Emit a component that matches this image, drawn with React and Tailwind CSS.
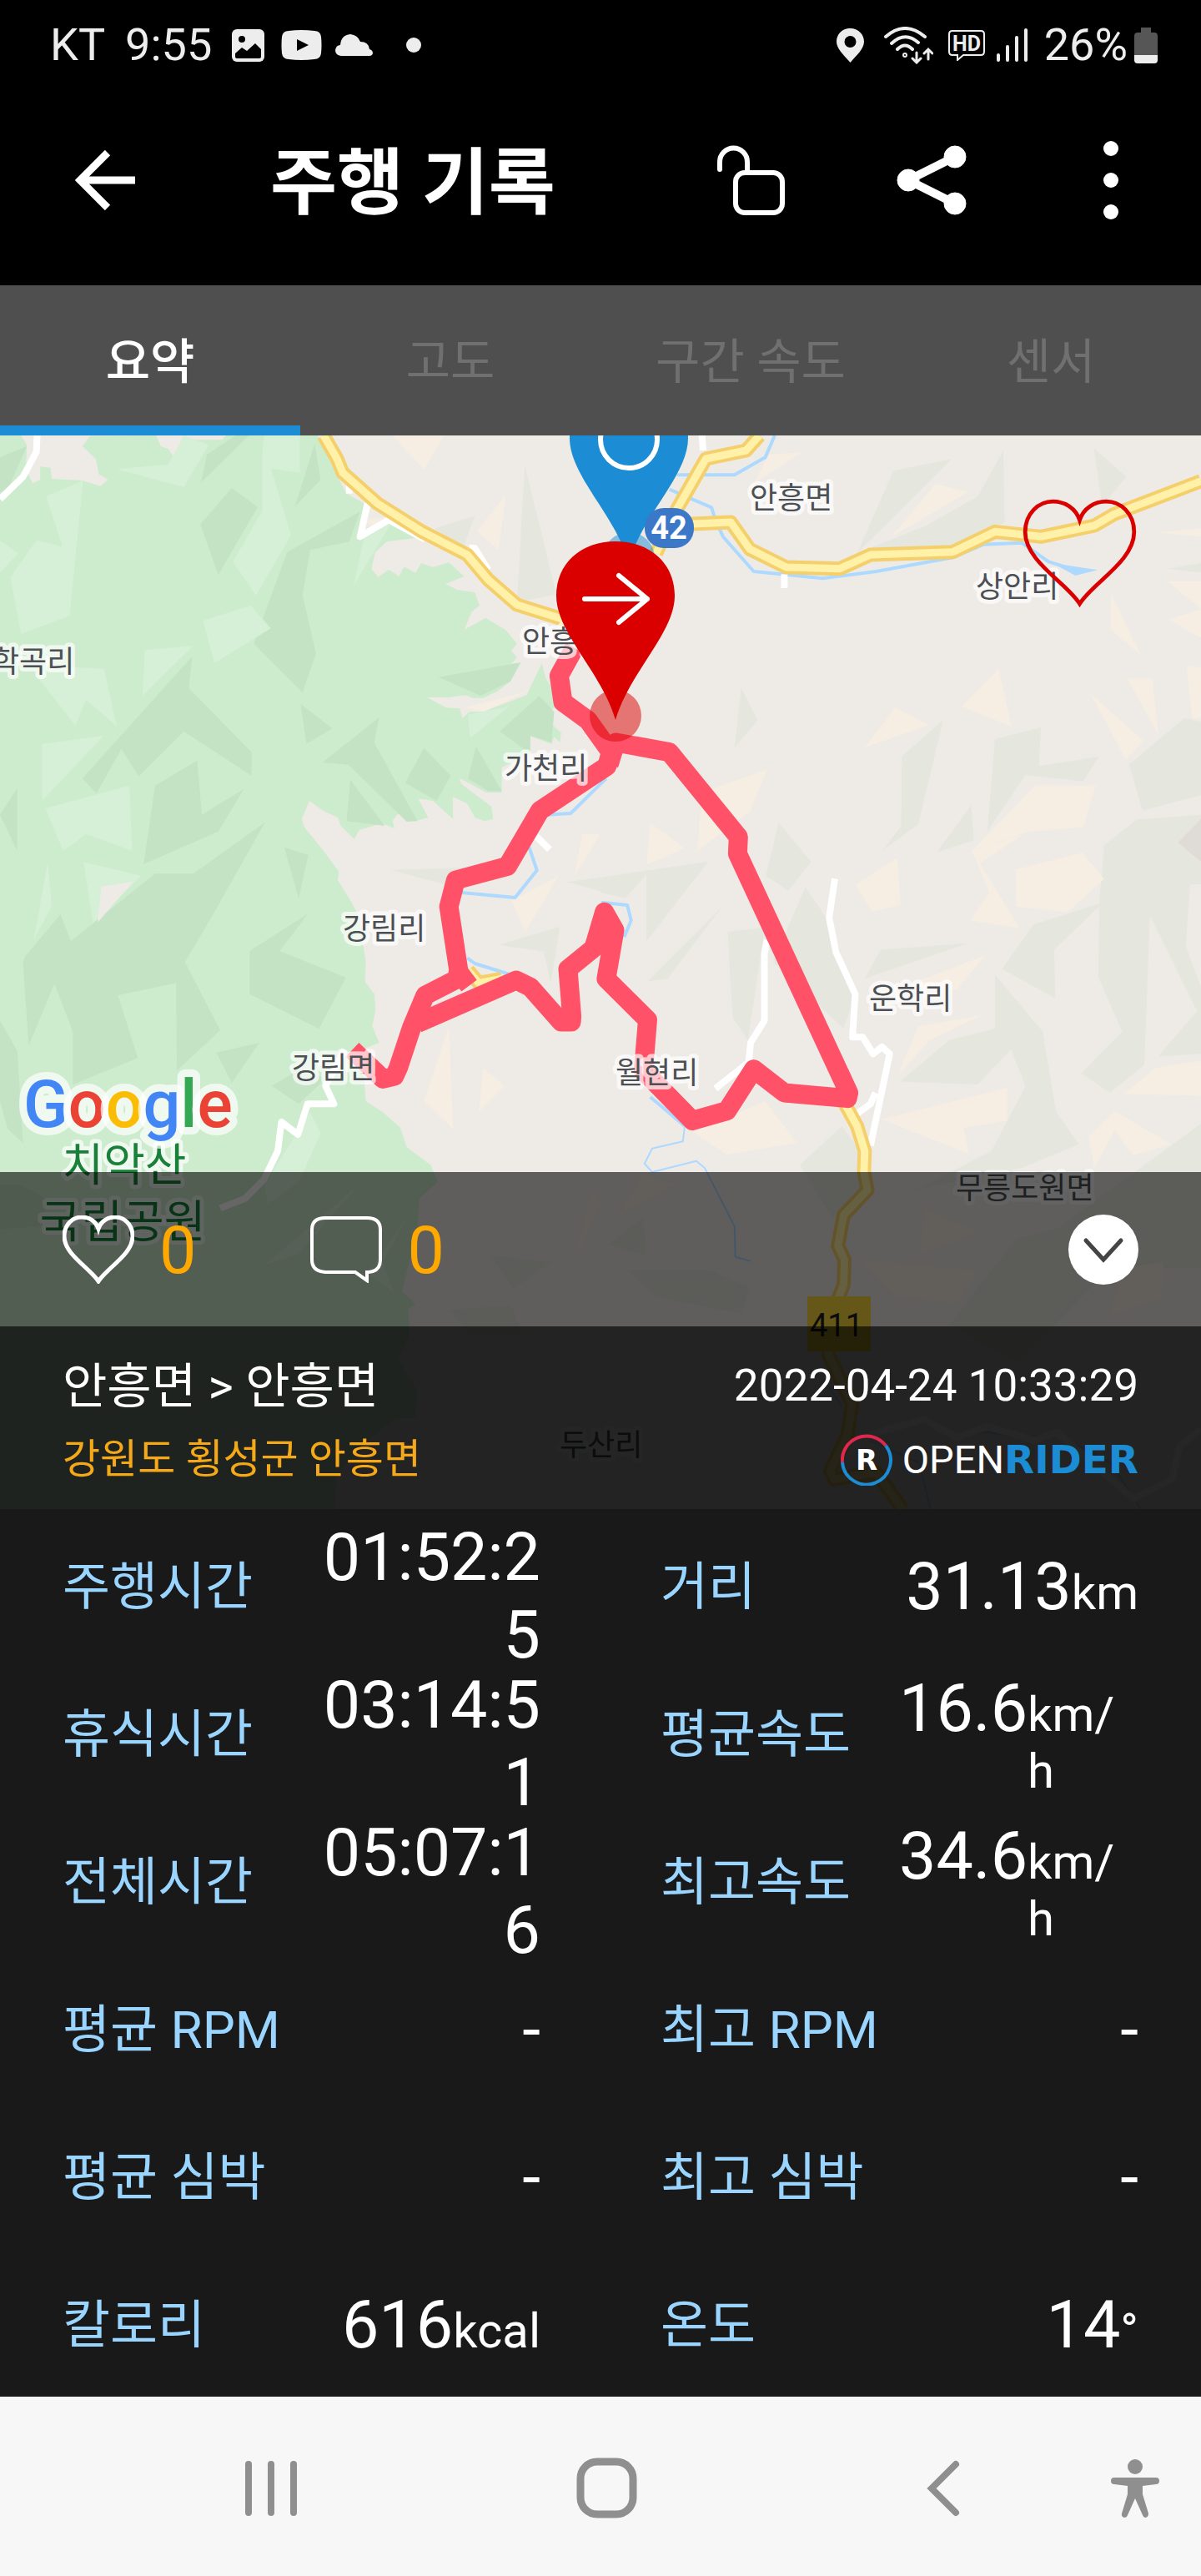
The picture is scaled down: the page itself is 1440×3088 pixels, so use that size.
import { useState } from "react";
import clsx from "clsx";

const TABS = ["요약", "고도", "구간 속도", "센서"];

const STATS = [
    { label: "주행시간", value: "01:52:25" },
    { label: "거리", value: "31.13", unit: "km" },
    { label: "휴식시간", value: "03:14:51" },
    { label: "평균속도", value: "16.6", unit: "km/h" },
    { label: "전체시간", value: "05:07:16" },
    { label: "최고속도", value: "34.6", unit: "km/h" },
    { label: "평균 RPM", value: "-" },
    { label: "최고 RPM", value: "-" },
    { label: "평균 심박", value: "-" },
    { label: "최고 심박", value: "-" },
    { label: "칼로리", value: "616", unit: "kcal" },
    { label: "온도", value: "14", unit: "°" },
];

/* ---------- map data (terrain grid is 3136 x 3861, two halves of 1568) ---------- */

const FOREST =
    "0,0 55,6 70,40 68,100 75,150 85,178 105,165 105,118 132,122 135,162 215,168 262,188 282,165 258,145 250,90 215,45 235,8 408,6 420,45 440,55 452,80 475,45 490,52 500,22 580,22 590,6 830,6 880,150 905,215 950,250 940,370 1020,300 1100,372 1010,388 980,425 970,485 988,515 1015,488 1042,513 1055,478 1085,500 1100,465 1130,480 1172,462 1212,513 1163,540 1195,562 1240,570 1252,617 1232,640 1212,705 1268,662 1320,705 1350,755 1335,780 1350,805 1333,830 1333,890 1300,925 1262,950 1235,950 1215,940 1170,948 1115,948 1165,985 1200,988 1208,1022 1225,1000 1262,1000 1375,940 1415,825 1425,880 1440,910 1448,985 1430,1000 1445,1050 1465,1075 1462,1110 1447,1090 1440,1115 1380,1085 1385,1150 1310,1200 1310,1290 1270,1290 1200,1238 1205,1260 1283,1340 1288,1385 1265,1393 1240,1380 1220,1330 1182,1305 1183,1385 1130,1320 1092,1312 1118,1380 1085,1393 1065,1365 1038,1368 1025,1392 1030,1420 998,1400 938,1425 925,1457 890,1410 882,1380 845,1357 808,1320 788,1385 795,1415 845,1500 885,1575 882,1605 920,1690 938,1740 955,1900 953,1970 978,2015 980,2075 972,2130 990,2190 945,2215 955,2400 1000,2440 1045,2495 1062,2565 1125,2630 1143,2690 1095,2750 1090,2850 1050,3085 1085,3130 1065,3150 1070,3240 1040,3330 1090,3440 1085,3540 1035,3540 960,3620 880,3740 875,3870 0,3870";

const FOREST_DARK = [
    "523,325 605,195 673,263 570,507",
    "525,175 540,75 615,6 650,6",
    "770,262 822,35 837,165",
    "750,425 940,280 912,388 810,418 790,580 825,790 790,930 663,755 690,650",
    "1145,875 1360,822 1333,890 1255,942",
    "785,972 868,1060 800,1115",
    "842,1182 990,1020 977,1110 1090,1393 1062,1395 910,1190",
    "1058,1255 1107,1130 1177,1230 1140,1320",
    "1305,1070 1408,943 1447,1000 1440,1110 1385,1085 1385,1150",
    "1222,1240 1243,1125 1310,1285 1275,1285",
    "905,1393 915,1245 1005,1410",
    "502,800 493,915 657,1145 657,1230 480,1070 362,1232 317,1133 252,1293 215,1240",
    "375,1548 405,1265 515,1175 527,1370 637,1277 570,1430",
    "692,1397 505,1582 405,1582 185,1825 158,1728 65,1880 60,1905 75,2200 142,1978 190,2150 190,2340 360,2245 308,2020 460,1975 462,2290 575,2145 483,1900 560,1720",
    "742,1487 805,1515 780,1670",
    "0,1370 45,1275 45,1500",
    "805,1725 730,1860 903,1955 833,2140 652,2015 652,1860",
    "565,2225 677,2190 605,2335",
    "0,2110 45,2220 60,2550 20,2500 0,2400",
    "710,2345 790,2280 850,2320 780,2410",
    "0,85 70,45 20,200 0,210",
    "0,2700 50,2700 120,2750 110,2850 0,2860",
];

const FOREST_LIGHT = [
    "305,127 440,110 480,6 545,40 480,192",
    "685,65 690,6 783,6 783,140 708,125 760,365 668,583 608,460 685,275",
    "120,225 217,168 182,655 55,720 27,515 95,383 163,405",
    "530,672 655,617 707,700 560,825",
    "378,778 505,762 372,943",
    "95,870 140,835 272,845 305,1053 225,957 197,1050",
    "110,1115 272,1085 110,1320",
    "118,1347 338,1265 345,1500 225,1440 165,1500",
    "0,385 48,430 0,500",
    "923,548 955,345 1020,325",
    "1222,1010 1330,980 1228,1095",
    "218,1540 370,1590 243,1760",
    "125,1540 135,1700 88,1820",
    "810,2440 838,2515 780,2690 700,2770 690,2700",
    "945,2690 780,2950 690,2990",
    "1070,2800 1000,2980 1030,3090 960,3020",
];

const HILLS_LEFT = [
    "1370,110 1453,578 1350,605",
    "1135,340 1240,295 1208,415",
    "1018,1568 1210,1560 1180,1628",
    "1300,1838 1462,1772 1438,1975 1420,1862",
    "1480,1612 1568,1595 1568,1645",
    "1280,2955 1440,2980 1340,3075",
    "1170,3150 1335,3135 1365,3240 1230,3240",
];

const SAND_LEFT = [
    "1025,6 1160,6 1107,130",
    "1245,350 1320,220 1302,418",
    "1215,985 1380,925 1262,1000",
    "1520,1440 1568,1440 1500,1590",
    "1458,1590 1335,1680 1372,1790",
    "1172,2130 1183,2500 1107,2400",
    "1262,2280 1317,2345 1250,2440",
    "1545,2720 1568,2770 1500,2980",
    "950,310 1010,300 975,340",
];

const HILLS_RIGHT = [
    "765,133 918,90 670,430",
    "1052,60 1055,320 880,420 670,430 850,330 985,225",
    "1288,50 1373,155 1310,260",
    "1480,485 1568,465 1568,500",
    "367,912 410,1030 350,1130",
    "787,1160 895,1028 830,1405 735,1500 785,1410",
    "1030,1098 1150,1055 1145,1195 1302,1160 1260,1250 1110,1228 1010,1430",
    "968,1335 975,1462 878,1505",
    "1525,1022 1568,1035 1568,1300 1415,1355 1380,1190",
    "1400,1387 1568,1370 1568,1620 1540,1620 1528,1840 1568,1990 1568,2105 1435,1735 1420,2270 1330,2370 1255,2300 1362,2150 1300,1955 1302,1700 1185,1855 1188,2030 1048,1925 1130,1765 1302,1690 1315,1480",
    "465,1397 550,1540 490,1643 432,1590",
    "0,1595 282,1538 120,1825 120,1585 65,1670 0,1650",
    "318,1700 175,1960 122,1970",
    "332,1790 430,1775 385,2180 345,2100",
    "535,1630 600,1760 665,2020 635,2140 450,1900",
    "732,1855 960,1832 690,1960",
    "1030,1945 1155,2150 1190,2440 1250,2555 1100,2640 820,2720 1020,2580 1110,2345 1072,2215 985,2340 782,2330 910,2180 1030,2140",
    "520,2630 630,2490 690,2600 688,2720 605,2820",
    "1455,2240 1568,2060 1568,2230",
    "1568,2480 1568,3000 1330,3000 1090,3340 910,3205 1085,2895 1190,2860 1410,2640",
    "70,3010 290,3010 388,3070 370,3165 145,3105",
    "20,2915 110,2820 120,2955",
];

const SAND_RIGHT = [
    "440,75 528,65 400,180",
    "875,180 960,210 760,370",
    "1455,355 1568,340 1568,370",
    "1480,530 1568,530 1568,630",
    "1485,668 1568,630 1568,735",
    "1332,570 1410,795 1332,705",
    "943,980 1040,845 1073,1052",
    "770,985 857,1048 690,1128",
    "1278,932 1418,1105 1372,1172",
    "1375,880 1440,880 1457,1080",
    "1530,835 1568,840 1568,1020 1545,1025",
    "265,1290 435,1207 390,1360 253,1500",
    "1135,1265 1293,1265 1260,1415 1120,1430 970,1500",
    "130,1400 220,1490 120,1550",
    "970,1500 1105,1440 990,1545 1095,1778 965,1750 1015,1650",
    "775,1525 783,1695 710,1718 665,1622",
    "1085,1567 1258,1507 1315,1600 1220,1720 1085,1700",
    "1005,1875 930,2000 800,1985",
    "995,2092 860,2180 775,2310 830,2130",
    "735,2465 1062,2352 1062,2470 948,2495 962,2590",
    "430,2400 513,2550 330,2592 240,2510",
    "1365,2375 1450,2280 1568,2255 1568,2380",
    "1343,2435 1490,2555 1390,2595 1343,2505 1290,2640 1275,2525",
    "110,2660 195,2700 50,2810",
    "845,2790 990,2870 835,2950",
    "680,2970 985,3010 930,3130 770,3100",
    "1365,3000 1470,2980 1465,3110 1330,3170",
];

const WATER = [
    "2023,6 1998,85 1918,148 1768,148",
    "1748,200 1858,265 1868,310 1888,370 1968,495 2148,520 2288,495 2488,445 2568,398 2668,392 2738,460 2808,490",
    "1380,1480 1402,1570 1345,1668 1205,1650",
    "1220,1885 1240,1905 1345,1950",
    "1583,1240 1560,1270 1490,1365 1430,1370",
    "1570,1685 1638,1695 1648,1750 1630,1810",
    "1698,2385 1788,2490",
];

const STREAMS = [
    "1788,2490 1783,2545 1703,2570 1683,2625 1703,2655",
    "1703,2655 1818,2615 1840,2640 1918,2850 1920,2960 1960,2975",
    "2150,3400 2200,3500",
    "2270,3620 2400,3700 2430,3870",
    "2500,3600 2580,3590 2660,3610 2760,3600 2900,3700 2980,3870",
];

const LANES = [
    "97,6 95,65 60,155 0,235",
    "912,180 912,215",
    "960,250 940,370 1015,310 1110,380",
    "1225,410 1240,412 1275,490",
    "1400,1447 1435,1495",
    "900,2215 850,2345 872,2410 803,2410 778,2520 735,2475 725,2580 690,2680 640,2750 575,2785",
    "1833,6 1836,60",
    "2048,505 2048,555",
    "2180,1600 2165,1740 2183,1865 2233,2015 2226,2170 2253,2170 2280,2230 2303,2205 2323,2230 2273,2560",
    "2286,2370 2273,2410 2238,2445",
    "2003,1820 1996,1870 1996,2110 1960,2190 1955,2260 1868,2355",
    "2270,3600 2413,3545 2498,3610 2578,3570 2700,3620 2760,3590 2960,3830 3060,3760 3080,3640 3136,3580",
];

const HIGHWAYS = [
    "845,6 880,90 895,140 985,250 1100,350 1220,435 1275,525 1350,615 1500,680",
    "1983,6 1948,60 1843,90 1768,270 1713,430",
    "1798,325 1908,318 1958,415 2053,480 2193,485 2273,435 2488,425 2598,352 2718,370 2858,330 2908,290 3136,170",
    "2198,2390 2238,2490 2258,2580 2256,2655 2265,2720 2203,2810 2188,2920 2205,2970 2203,3060 2183,3130 2163,3310 2225,3490 2213,3600 2168,3730 2178,3760 2288,3735 2358,3870",
    "1222,1930 1250,1975 1310,1960",
];

const ROUTE = [
    "1500,770 1460,870 1470,965 1535,1030 1595,1145 1585,1195 1410,1355 1325,1555 1190,1605 1172,1700 1197,1925 1195,1960 1110,2020 1075,2135 1040,2280 1030,2310 1000,2320 920,2215",
    "1195,1930 1225,1985",
    "1090,2120 1348,1965 1385,1990 1465,2115 1492,2115 1493,2095 1483,1925 1550,1850 1578,1720 1605,1785 1583,1960 1691,2108 1680,2290 1808,2470 1898,2435 1968,2285 2048,2370 2213,2390 2216,2370 1926,1510 1928,1450 1748,1145 1608,1110 1590,1190",
];

const PLACES = [
    { name: "학곡리", x: -10, y: 284 },
    { name: "안흥면", x: 626, y: 260 },
    { name: "가천리", x: 605, y: 412 },
    { name: "안흥면", x: 899, y: 88 },
    { name: "상안리", x: 1170, y: 194 },
    { name: "강림리", x: 411, y: 604 },
    { name: "강림면", x: 350, y: 771 },
    { name: "운학리", x: 1042, y: 688 },
    { name: "월현리", x: 738, y: 777 },
    { name: "무릉도원면", x: 1146, y: 915 },
    { name: "두산리", x: 671, y: 1223 },
];

const Polygons = ({ items, fill }) => items.map((points) => <polygon key={points} points={points} fill={fill} />);

const Lines = ({ items, color, width }) =>
    items.map((points) => (
        <polyline
            key={points}
            points={points}
            fill="none"
            stroke={color}
            strokeWidth={width}
            strokeLinejoin="round"
            vectorEffect="non-scaling-stroke"
        />
    ));

const Pin = ({ x, y, color, children }) => (
    <g transform={`translate(${x} ${y})`}>
        <circle cx="0" cy="-5" r="31" fill={color} fillOpacity="0.5" />
        <path d="M0 0C-17 -58 -71 -104 -71 -149C-71 -187 -42 -214 0 -214C42 -214 71 -187 71 -149C71 -104 17 -58 0 0Z" fill={color} />
        <g fill="none" stroke="#fff" strokeWidth="6" strokeLinecap="round" strokeLinejoin="round">
            {children}
        </g>
    </g>
);

const RouteMap = () => (
    <svg viewBox="0 0 1440 1287" className="block w-full bg-[#eeebe6]" role="img" aria-label="주행 경로 지도">
        {/* Terrain, roads and the ridden track */}
        <svg width="1440" height="1287" viewBox="0 6 3136 3861" preserveAspectRatio="none">
            <polygon points={FOREST} fill="#cdebcd" />
            <Polygons items={FOREST_DARK} fill="#c4e3c4" />
            <Polygons items={FOREST_LIGHT} fill="#d6efd7" />
            <polygon points="265,1628 348,1610 255,1757" fill="#eeebe6" />
            <Polygons items={HILLS_LEFT} fill="#e5e7df" />
            <Polygons items={SAND_LEFT} fill="#f6ede3" />
            <g transform="translate(1568 0)">
                <Polygons items={HILLS_RIGHT} fill="#e5e7df" />
                <Polygons items={SAND_RIGHT} fill="#f6ede3" />
                <polygon points="1508,1470 1568,1385 1568,1540" fill="#dfdcd8" />
                <polygon points="1180,465 1298,490 1240,510" fill="#add9ff" />
            </g>
            <Lines items={WATER} color="#add9ff" width="4" />
            <Lines items={STREAMS} color="#add9ff" width="2" />
            <Lines items={LANES} color="#ffffff" width="8" />
            <Lines items={HIGHWAYS} color="#f5cf6b" width="17" />
            <Lines items={HIGHWAYS} color="#fff1a8" width="9" />
            <Lines items={ROUTE} color="#ff5268" width="23" />
        </svg>

        {/* Place names */}
        <g
            fontFamily="'Noto Sans CJK KR', sans-serif"
            fontSize="36"
            fill="#4c5054"
            stroke="#ffffff"
            strokeOpacity="0.7"
            strokeWidth="10"
            strokeLinejoin="round"
            paintOrder="stroke"
        >
            {PLACES.map((p) => (
                <text key={`${p.name}-${p.x}`} x={p.x} y={p.y}>
                    {p.name}
                </text>
            ))}
            <g fontSize="54" fill="#188038" textAnchor="middle">
                <text x="149" y="894">치악산</text>
                <text x="147" y="962">국립공원</text>
            </g>
            <text x="28" y="829" fontFamily="Roboto, sans-serif" fontWeight="500" fontSize="79" strokeWidth="18">
                <tspan fill="#4285f4">G</tspan>
                <tspan fill="#ea4335">o</tspan>
                <tspan fill="#fbbc04">o</tspan>
                <tspan fill="#4285f4">g</tspan>
                <tspan fill="#34a853">l</tspan>
                <tspan fill="#ea4335">e</tspan>
            </text>
        </g>

        {/* Road numbers */}
        <g fontFamily="Roboto, sans-serif" fontSize="38" textAnchor="middle">
            <rect x="968" y="1032" width="76" height="66" fill="#f9d93c" />
            <text x="1003" y="1080" fill="#1f1f1f">411</text>
        </g>

        {/* Start and finish */}
        <Pin x={754} y={152} color="#1c8cd4">
            <circle cx="0" cy="-147" r="34" />
        </Pin>
        <g fontFamily="Roboto, sans-serif" fontSize="38" fontWeight="700" textAnchor="middle">
            <rect x="773" y="87" width="59" height="48" rx="23" fill="#3b78c8" />
            <text x="802" y="124" fill="#ffffff">42</text>
        </g>
        <Pin x={738} y={341} color="#da0000">
            <path d="M-37 -145H38M4 -173L38 -145L4 -117" />
        </Pin>
    </svg>
);

const HeartIcon = ({ className, strokeWidth }) => (
    <svg viewBox="0 0 86 82" className={className} fill="none" stroke="currentColor" strokeWidth={strokeWidth}>
        <path d="M43 79C33 63 2 47 2 25C2 11 12 2 23 2C32 2 40 7 43 16C46 7 54 2 63 2C74 2 84 11 84 25C84 47 53 63 43 79Z" />
    </svg>
);

const StatusBar = () => (
    <div className="flex h-[90px] items-center justify-between pt-[18px] pr-[52px] pl-[60px] text-[54px] leading-[64px] text-[#ededed]">
        <div className="flex items-center">
            <span>KT</span>
            <span className="ml-6">9:55</span>
            <svg viewBox="0 0 39 39" className="ml-6 w-[39px]">
                <rect width="39" height="39" rx="6" fill="currentColor" />
                <circle cx="12" cy="12" r="4" fill="#000" />
                <path d="M4 29L12 22L18 26L28 17L35 24V33Q35 35 33 35H6Q4 35 4 33Z" fill="#000" />
            </svg>
            <svg viewBox="0 0 49 36" className="ml-5 w-[49px]">
                <path d="M9 1Q24 -1 40 1Q47 1 48 8Q49 18 48 28Q47 35 40 35Q24 37 9 35Q2 35 1 28Q0 18 1 8Q2 1 9 1Z" fill="currentColor" />
                <path d="M19 11V25L33 18Z" fill="#000" />
            </svg>
            <svg viewBox="0 0 45 26" className="ml-4 w-[45px]" fill="currentColor">
                <path d="M7 26Q0 25 0 19Q1 13 6 13Q7 1 18 0Q27 1 30 9Q40 9 41 18Q45 19 45 23Q44 26 41 26Z" />
            </svg>
            <span className="ml-10 size-[18px] rounded-full bg-[#ededed]" />
        </div>
        <div className="flex items-center">
            <svg viewBox="0 0 33 41" className="w-[33px]" fill="currentColor" fillRule="evenodd">
                <path d="M16.500 0C7 0 0 7 0 16C0 25 10 33 16.500 41C23 33 33 25 33 16C33 7 26 0 16.500 0ZM16.500 9A7 7 0 1 1 16.500 23A7 7 0 1 1 16.500 9Z" />
            </svg>
            <svg viewBox="0 0 59 45" className="ml-6 w-[59px]" fill="none" stroke="currentColor" strokeWidth="4" strokeLinecap="round">
                <path d="M2 12Q25 -8 49 12M9 20Q25 5 41 19M16 27Q25 18 34 27" />
                <circle cx="25" cy="34" r="1" />
                <path d="M39 31V43M34 38L39 43L44 38M53 39V27M48 32L53 27L58 32" strokeWidth="3" />
            </svg>
            <svg viewBox="0 0 44 37" className="ml-[18px] w-[44px]">
                <path d="M5 1H39Q43 1 43 5V26Q43 30 39 30H18L11 36V30H5Q1 30 1 26V5Q1 1 5 1Z" fill="none" stroke="currentColor" strokeWidth="2" />
                <text x="22" y="25" fontFamily="Roboto, sans-serif" fontSize="25" fontWeight="700" textAnchor="middle" fill="currentColor">HD</text>
            </svg>
            <svg viewBox="0 0 37 40" className="ml-[14px] w-[37px]" stroke="currentColor" strokeWidth="4" strokeLinecap="round">
                <path d="M2 32V38M13 22V38M24 11V38M35 2V38" />
            </svg>
            <span className="ml-5">26%</span>
            <svg viewBox="0 0 28 43" className="ml-2 w-[28px]">
                <path d="M8 0H20V6H24Q28 6 28 10V33H0V10Q0 6 4 6H8Z" fill="#565656" />
                <path d="M0 33H28V39Q28 43 24 43H4Q0 43 0 39Z" fill="currentColor" />
            </svg>
        </div>
    </div>
);

const Header = () => (
    <header className="flex h-[252px] items-center pr-[99px] pl-[90px]">
        <button aria-label="뒤로">
            <svg viewBox="0 0 72 72" className="w-[72px]" fill="none" stroke="currentColor" strokeWidth="9">
                <path d="M72 36H7M39 3L6 36L39 69" />
            </svg>
        </button>
        <h1 className="ml-[162px] flex-1 pt-2 text-[87px] leading-[104px] font-bold">주행 기록</h1>
        <button aria-label="공개">
            <svg viewBox="0 0 81 84" className="w-[81px]" fill="none" stroke="currentColor" strokeWidth="6" strokeLinecap="round">
                <path d="M3 29V20A16 16 0 0 1 36 20V32" />
                <rect x="22" y="33" width="56" height="48" rx="11" />
            </svg>
        </button>
        <button aria-label="공유" className="ml-[134px]">
            <svg viewBox="0 0 84 84" className="w-[84px]" fill="currentColor" stroke="currentColor">
                <path d="M70 14L14 42L70 70" fill="none" strokeWidth="10" />
                <circle cx="70" cy="14" r="13" />
                <circle cx="14" cy="42" r="13" />
                <circle cx="70" cy="70" r="13" />
            </svg>
        </button>
        <button aria-label="더보기" className="ml-[164px]">
            <svg viewBox="0 0 18 94" className="w-[18px]" fill="currentColor">
                <circle cx="9" cy="9" r="9" />
                <circle cx="9" cy="47" r="9" />
                <circle cx="9" cy="85" r="9" />
            </svg>
        </button>
    </header>
);

const Tabs = ({ active, onChange }) => (
    <nav className="grid h-[180px] grid-cols-4 bg-[#4f4f4f] text-[58px]">
        {TABS.map((tab, i) => (
            <button
                key={tab}
                onClick={() => onChange(i)}
                className={clsx(
                    "border-b-[12px] pt-4",
                    i === active ? "border-b-[#1c8cd4] font-medium text-white" : "border-b-transparent text-[#707070]"
                )}
            >
                {tab}
            </button>
        ))}
    </nav>
);

const Logo = () => (
    <div className="flex items-center">
        <svg viewBox="0 0 62 62" className="mr-3 w-[62px]" fill="none" strokeWidth="4">
            <path d="M2 34A29 29 0 0 1 54 14" stroke="#e0284f" />
            <path d="M54 14A29 29 0 1 1 2 34" stroke="#1c8cd4" />
            <text x="31" y="43" fontFamily="'DejaVu Sans', sans-serif" fontSize="34" fontWeight="700" textAnchor="middle" fill="#fff">R</text>
        </svg>
        <span className="text-[47px]">OPEN</span>
        <span className="font-['DejaVu_Sans',sans-serif] text-[47px] font-bold text-[#1c8cd4]">RIDER</span>
    </div>
);

const Stat = ({ label, value, unit }) => (
    <div className="flex h-[177px] justify-between pt-[10px] pb-1 [align-items:safe_center]">
        <dt className="text-[62px] leading-[72px] text-[#99d5ff]">{label}</dt>
        <dd className="flex w-[287px] items-baseline justify-end text-right text-[79px] leading-[93px] text-white">
            <span className={unit ? "shrink-0" : "break-all"}>{value}</span>
            {unit && <span className="text-left text-[58px] leading-[68px] break-all">{unit}</span>}
        </dd>
    </div>
);

const SystemNav = () => (
    <footer className="flex h-[215px] items-center bg-[#f7f7f7] pt-1 pr-[50px] pl-[124px] text-[#8f8f8f]">
        <div className="grid flex-1 grid-cols-3 items-center justify-items-center">
            <button aria-label="최근 앱">
                <svg viewBox="0 0 64 68" className="w-16" stroke="currentColor" strokeWidth="8" strokeLinecap="round">
                    <path d="M5 5V63M32 5V63M59 5V63" />
                </svg>
            </button>
            <button aria-label="홈">
                <svg viewBox="0 0 73 73" className="w-[73px]" fill="none" stroke="currentColor" strokeWidth="9">
                    <rect x="5" y="5" width="63" height="63" rx="20" />
                </svg>
            </button>
            <button aria-label="이전">
                <svg viewBox="0 0 40 68" className="w-10" fill="none" stroke="currentColor" strokeWidth="8" strokeLinecap="round">
                    <path d="M35 5L6 34L35 63" />
                </svg>
            </button>
        </div>
        <button aria-label="접근성">
            <svg viewBox="0 0 58 70" className="w-[58px]" fill="currentColor">
                <circle cx="29" cy="9" r="9" />
                <path d="M4 22H54Q58 22 58 26Q58 30 54 30L38 32V42L45 65Q45 69 42 70Q39 70 38 67L29 47L20 67Q19 70 16 70Q12 69 13 65L20 42V32L4 30Q0 30 0 26Q0 22 4 22Z" />
            </svg>
        </button>
    </footer>
);

const App = () => {
    const [tab, setTab] = useState(0);

    return (
        <div className="w-full bg-black font-['Roboto','Noto_Sans_CJK_KR',sans-serif] text-white">
            <StatusBar />
            <Header />
            <Tabs active={tab} onChange={setTab} />

            <section className="relative">
                <RouteMap />
                <button aria-label="좋아요" className="absolute top-[76px] right-[77px] text-[#da0000]">
                    <HeartIcon className="w-[137px]" strokeWidth="3" />
                </button>

                {/* Reactions and ride title sit over the bottom of the map */}
                <div className="absolute inset-x-0 bottom-0">
                    <div className="flex h-[185px] items-center bg-black/60 px-[75px] text-[79px] leading-[93px] text-[#ffa800]">
                        <button className="flex items-center gap-[30px]">
                            <HeartIcon className="w-[86px] text-white" strokeWidth="5" />
                            <span className="pt-1">0</span>
                        </button>
                        <button className="ml-[137px] flex items-center gap-[30px]">
                            <svg viewBox="0 0 86 80" className="w-[86px] text-white" fill="none" stroke="currentColor" strokeWidth="4">
                                <path d="M18 2H68Q84 2 84 16V52Q84 66 70 67H68V77L54 67H18Q2 66 2 52V16Q2 2 18 2Z" />
                            </svg>
                            <span className="pt-1">0</span>
                        </button>
                        <button aria-label="접기" className="ml-auto">
                            <svg viewBox="0 0 84 84" className="w-[84px]" fill="none">
                                <circle cx="42" cy="42" r="42" fill="#fff" />
                                <path d="M21 31L42 54L63 31" stroke="#444" strokeWidth="5" strokeLinecap="round" />
                            </svg>
                        </button>
                    </div>
                    <div className="bg-black/85 px-[75px] pt-8 pb-[11px]">
                        <div className="flex h-20 items-center justify-between">
                            <h2 className="text-[58px]">안흥면 &gt; 안흥면</h2>
                            <time className="text-[53px]">2022-04-24 10:33:29</time>
                        </div>
                        <div className="flex h-24 items-center justify-between">
                            <p className="text-[49px] text-[#f5a818]">강원도 횡성군 안흥면</p>
                            <Logo />
                        </div>
                    </div>
                </div>
            </section>

            <dl className="grid grid-cols-2 gap-x-[144px] bg-[#191919] px-[75px] pt-0.5">
                {STATS.map((stat) => (
                    <Stat key={stat.label} {...stat} />
                ))}
            </dl>

            <SystemNav />
        </div>
    );
};

export default App;
